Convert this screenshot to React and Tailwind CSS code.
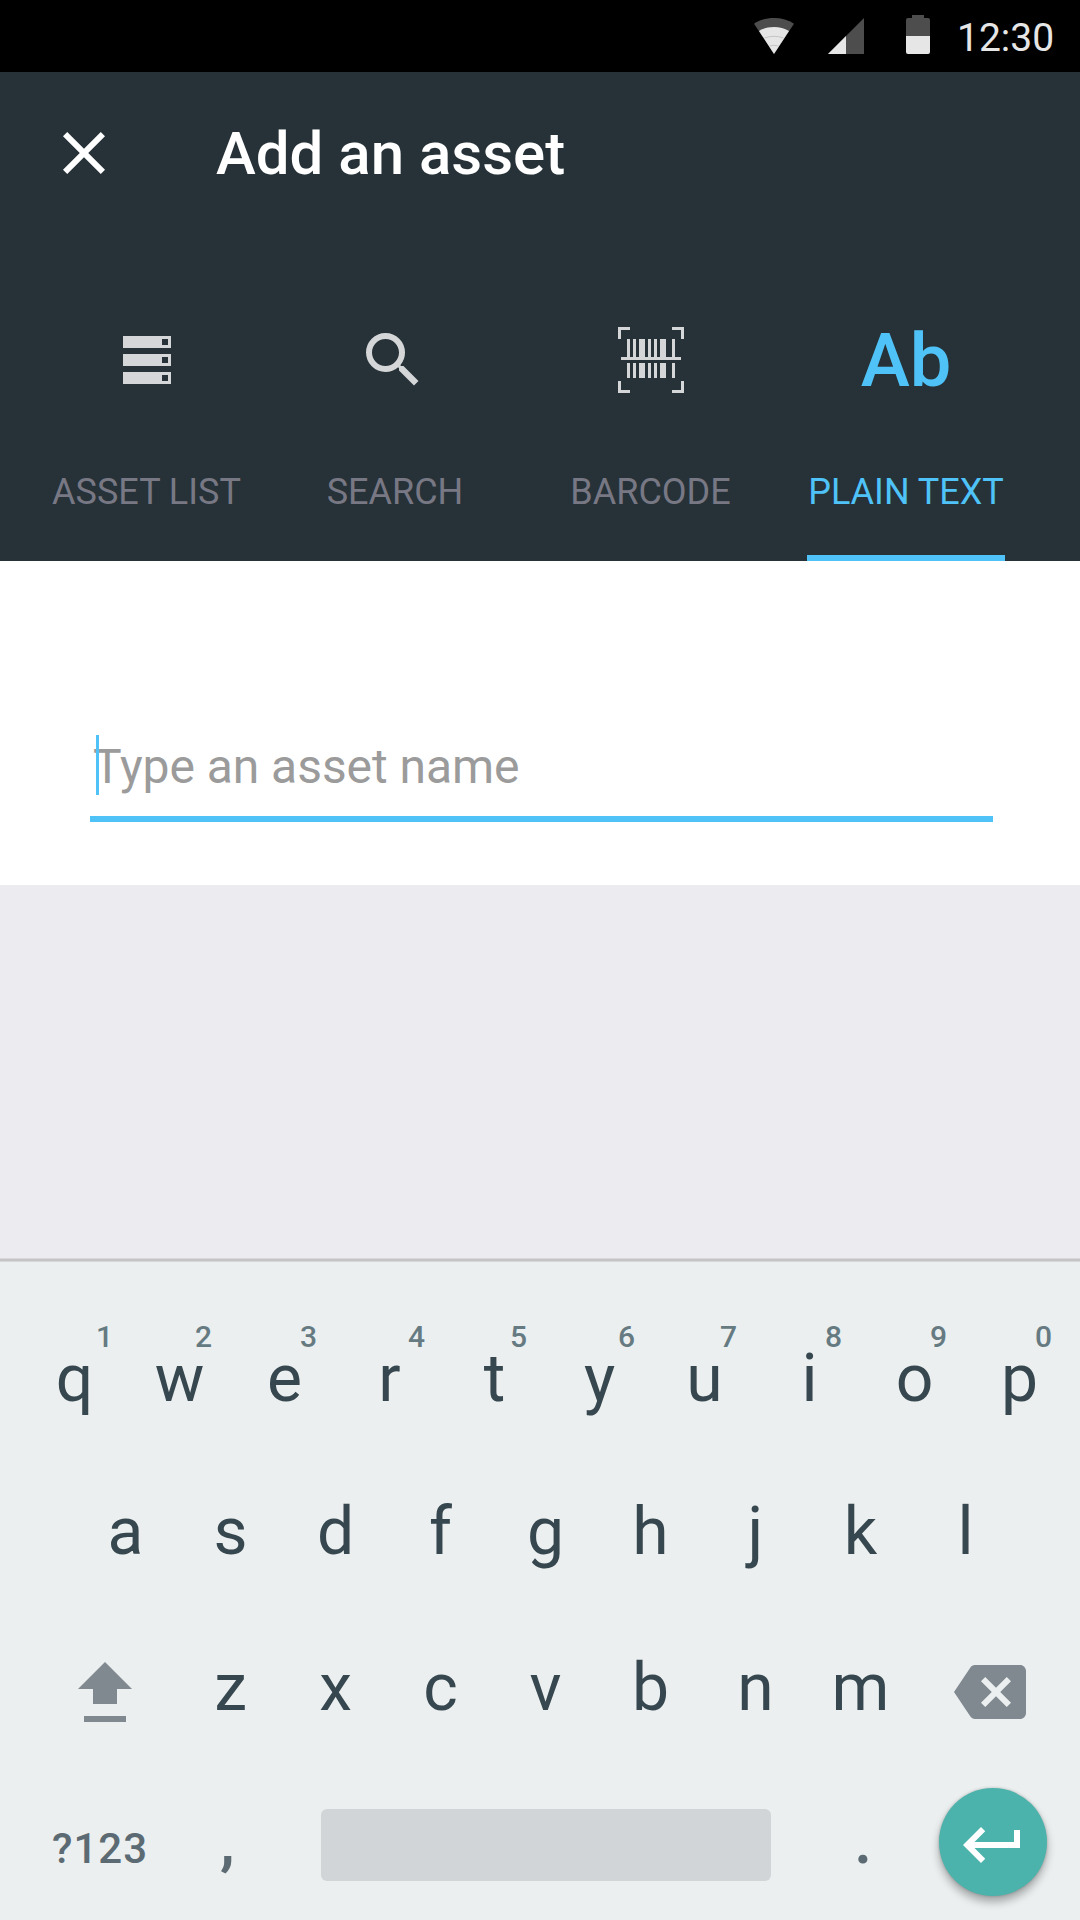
const topKeys = [
  { letter: "q", hint: "1", pad: "pl-[74px]" },
  { letter: "w", hint: "2", pad: "pl-[68px]" },
  { letter: "e", hint: "3", pad: "pl-[68px]" },
  { letter: "r", hint: "4", pad: "pl-[71px]" },
  { letter: "t", hint: "5", pad: "pl-[68px]" },
  { letter: "y", hint: "6", pad: "pl-[71px]" },
  { letter: "u", hint: "7", pad: "pl-[68px]" },
  { letter: "i", hint: "8", pad: "pl-[68px]" },
  { letter: "o", hint: "9", pad: "pl-[68px]" },
  { letter: "p", hint: "0", pad: "pl-[68px]" },
];

function WifiIcon() {
  return (
    <svg className="h-[36px] w-[40px]" viewBox="0 0 40 36">
      <path d="M20 36 L0 5.7 C5.5 1.9 12.5 0 20 0 S34.5 1.9 40 5.7 Z" fill="#4d4d4d" />
      <path d="M20 36 L5 13 C9.5 10.200 14.500 9 20 9 S30.500 10.200 35 13 Z" fill="#e6e6e6" />
      <path d="M10.500 20 Q20 16.500 29.500 20 M15.500 28 Q20 26.500 24.500 28" fill="none" stroke="#bdbdbd" strokeWidth="0.8" />
    </svg>
  );
}

function SignalIcon() {
  return (
    <svg className="h-[36px] w-[36px]" viewBox="0 0 36 36">
      <path d="M36 0V36H0Z" fill="#4d4d4d" />
      <path d="M18 18V36H0Z" fill="#e6e6e6" />
    </svg>
  );
}

function BatteryIcon() {
  return (
    <svg className="h-[39px] w-[24px]" viewBox="0 0 24 39">
      <path d="M6 0H18V3H22A2 2 0 0 1 24 5V21H0V5A2 2 0 0 1 2 3H6Z" fill="#4d4d4d" />
      <path d="M0 21H24V37A2 2 0 0 1 22 39H2A2 2 0 0 1 0 37Z" fill="#e6e6e6" />
    </svg>
  );
}

function CloseIcon() {
  return (
    <svg className="size-[72px]" viewBox="0 0 24 24" fill="#fff">
      <path d="M19 6.410 17.590 5 12 10.590 6.410 5 5 6.410 10.590 12 5 17.590 6.410 19 12 13.410 17.590 19 19 17.590 13.410 12z" />
    </svg>
  );
}

function ListIcon() {
  return (
    <svg className="size-[48px]" viewBox="0 0 48 48" fill="#d4d6d7" fillRule="evenodd">
      <path d="M0 0H48V12H0ZM39 3V9H45V3Z" />
      <path d="M0 18H48V30H0ZM39 21V27H45V21Z" />
      <path d="M0 36H48V48H0ZM39 39V45H45V39Z" />
    </svg>
  );
}

function SearchIcon() {
  return (
    <svg className="size-[72px]" viewBox="0 0 24 24" fill="#d4d6d7">
      <path d="M15.500 14h-.79l-.28-.27A6.471 6.471 0 0 0 16 9.500 6.500 6.500 0 1 0 9.500 16c1.610 0 3.090-.59 4.230-1.570l.27.28v.79l5 4.990L20.490 19l-4.990-5zm-6 0C7.010 14 5 11.990 5 9.500S7.010 5 9.500 5 14 7.010 14 9.500 11.990 14 9.500 14z" />
    </svg>
  );
}

function BarcodeIcon() {
  return (
    <svg className="size-[66px]" viewBox="0 0 66 66" fill="#d4d6d7">
      <path d="M0 0H12V3H3V12H0ZM54 0H66V12H63V3H54ZM0 54H3V63H12V66H0ZM63 54H66V66H54V63H63Z" />
      <path d="M9 12h3v18h-3zM15 12h3v18h-3zM21 12h6v18h-6zM30 12h3v18h-3zM36 12h3v18h-3zM42 12h6v18h-6zM54 12h3v18h-3z" />
      <path d="M3 30H63V33H3Z" />
      <path d="M9 36h3v15h-3zM15 36h3v15h-3zM21 36h6v15h-6zM30 36h3v15h-3zM36 36h3v15h-3zM42 36h6v15h-6zM54 36h3v15h-3z" />
    </svg>
  );
}

function Tab({ icon, label, className, labelClass = "", active }) {
  return (
    <div className={`flex shrink-0 flex-col items-center ${className}`}>
      <div className="flex h-[72px] items-center justify-center">{icon}</div>
      <div
        className={`mt-[72px] whitespace-nowrap text-[36px] leading-[48px] ${labelClass} ${active ? "text-[#4fc3f7]" : "text-[#787885]"}`}
      >
        {label}
      </div>
      {active && <div className="mt-auto h-[6px] w-full bg-[#4fc3f7]" />}
    </div>
  );
}

function Key({ children }) {
  return (
    <div className="w-[105px] text-center text-[66px] leading-[78px] text-[#37474f]">{children}</div>
  );
}

export default function App() {
  return (
    <div className="flex h-[1920px] w-[1080px] flex-col overflow-hidden bg-[#ecebf0] font-['Roboto',sans-serif]">
      <div className="flex h-[72px] shrink-0 items-end bg-black pb-[18px] pl-[754px]">
        <WifiIcon />
        <div className="ml-[34px]"><SignalIcon /></div>
        <div className="ml-[42px]"><BatteryIcon /></div>
        <div className="-mb-[8px] ml-[27px] text-[39px] leading-[47px] text-[#e6e6e6]">12:30</div>
      </div>

      <header className="flex h-[489px] shrink-0 flex-col bg-[#263238]">
        <div className="flex h-[162px] items-center pl-[48px]">
          <CloseIcon />
          <h1 className="ml-[96px] mt-[2px] text-[60px] font-medium leading-[72px] text-white">Add an asset</h1>
        </div>
        <div className="mt-[90px] flex flex-1">
          <Tab className="ml-[48px] w-[198px]" labelClass="pr-[1px]" icon={<ListIcon />} label="ASSET LIST" />
          <Tab className="ml-[48px] w-[198px]" labelClass="pl-[4px]" icon={<SearchIcon />} label="SEARCH" />
          <Tab className="ml-[60px] w-[198px]" labelClass="pr-[1px]" icon={<BarcodeIcon />} label="BARCODE" />
          <Tab
            className="ml-[57px] w-[198px]"
            active
            icon={<span className="mt-[2px] text-[74px] font-medium leading-[72px] text-[#4fc3f7]">Ab</span>}
            label="PLAIN TEXT"
          />
        </div>
      </header>

      <section className="h-[324px] shrink-0 bg-white px-[90px] pt-[174px]">
        <div className="relative mr-[-3px] h-[87px] border-b-[6px] border-[#4fc3f7] pl-[3px] text-[48px] leading-[64px] tracking-[-0.05px] text-[#9b9b9b]">
          Type an asset name
          <span className="absolute left-[6px] top-0 h-[60px] w-[3px] bg-[#4fc3f7]" />
        </div>
      </section>

      <section className="mt-[373px] flex h-[662px] shrink-0 flex-col bg-[#ebefef]">
        <div className="h-[4px] shrink-0 border-y border-[#d8d8da] bg-[#c4c4c5]" />
        <div className="flex pl-[22px] pt-[58px]">
          {topKeys.map((key) => (
            <div key={key.letter} className="w-[105px]">
              <div className={`${key.pad} -mb-[14px] w-[105px] whitespace-nowrap text-[30px] font-medium leading-[34px] text-[#667a82]`}>
                {key.hint}
              </div>
              <Key>{key.letter}</Key>
            </div>
          ))}
        </div>
        <div className="mt-[75px] flex pl-[73px]">
          {"asdfghjkl".split("").map((c) => <Key key={c}>{c}</Key>)}
        </div>
        <div className="mt-[78px] flex">
          <svg className="ml-[78px] mr-[46px] mt-[13px] h-[60px] w-[54px]" viewBox="0 0 54 60" fill="#80898f">
            <path d="M27 0 54 27H39V42H15V27H0ZM6 54H48V60H6Z" />
          </svg>
          {"zxcvbnm".split("").map((c) => <Key key={c}>{c}</Key>)}
          <svg className="ml-[41px] mt-[7px] size-[72px]" viewBox="0 0 24 24" fill="#80898f">
            <path d="M22 3H7c-.69 0-1.230.35-1.590.88L0 12l5.410 8.110c.36.53.9.89 1.590.89h15c1.100 0 2-.9 2-2V5c0-1.100-.9-2-2-2zm-3 12.590L17.590 17 14 13.410 10.410 17 9 15.590 12.590 12 9 8.410 10.410 7 14 10.590 17.590 7 19 8.410 15.410 12 19 15.590z" />
          </svg>
        </div>
        <div className="mt-[60px] flex h-[108px] items-start text-[#5c6b73]">
          <div className="ml-[52px] mt-[37px] w-[160px] text-[42px] font-medium leading-[48px] tracking-[1px]">?123</div>
          <div className="ml-[8px] mt-[19px] w-[101px] text-[60px] font-bold leading-[72px]">,</div>
          <div className="mt-[21px] h-[72px] w-[450px] rounded-[6px] bg-[#d1d5d8]" />
          <div className="ml-[83px] mt-[17px] w-[85px] text-[66px] font-medium leading-[72px]">.</div>
          <div className="flex size-[108px] items-center justify-center rounded-full bg-[#4bb3ab] pt-[6px] shadow-[0_6px_8px_rgba(0,0,0,0.3),0_0_3px_rgba(0,0,0,0.2)]">
            <svg className="size-[72px]" viewBox="0 0 24 24" fill="#fff">
              <path d="M19 7v4H5.830l3.580-3.590L8 6l-6 6 6 6 1.410-1.410L5.830 13H21V7z" />
            </svg>
          </div>
        </div>
      </section>
    </div>
  );
}
